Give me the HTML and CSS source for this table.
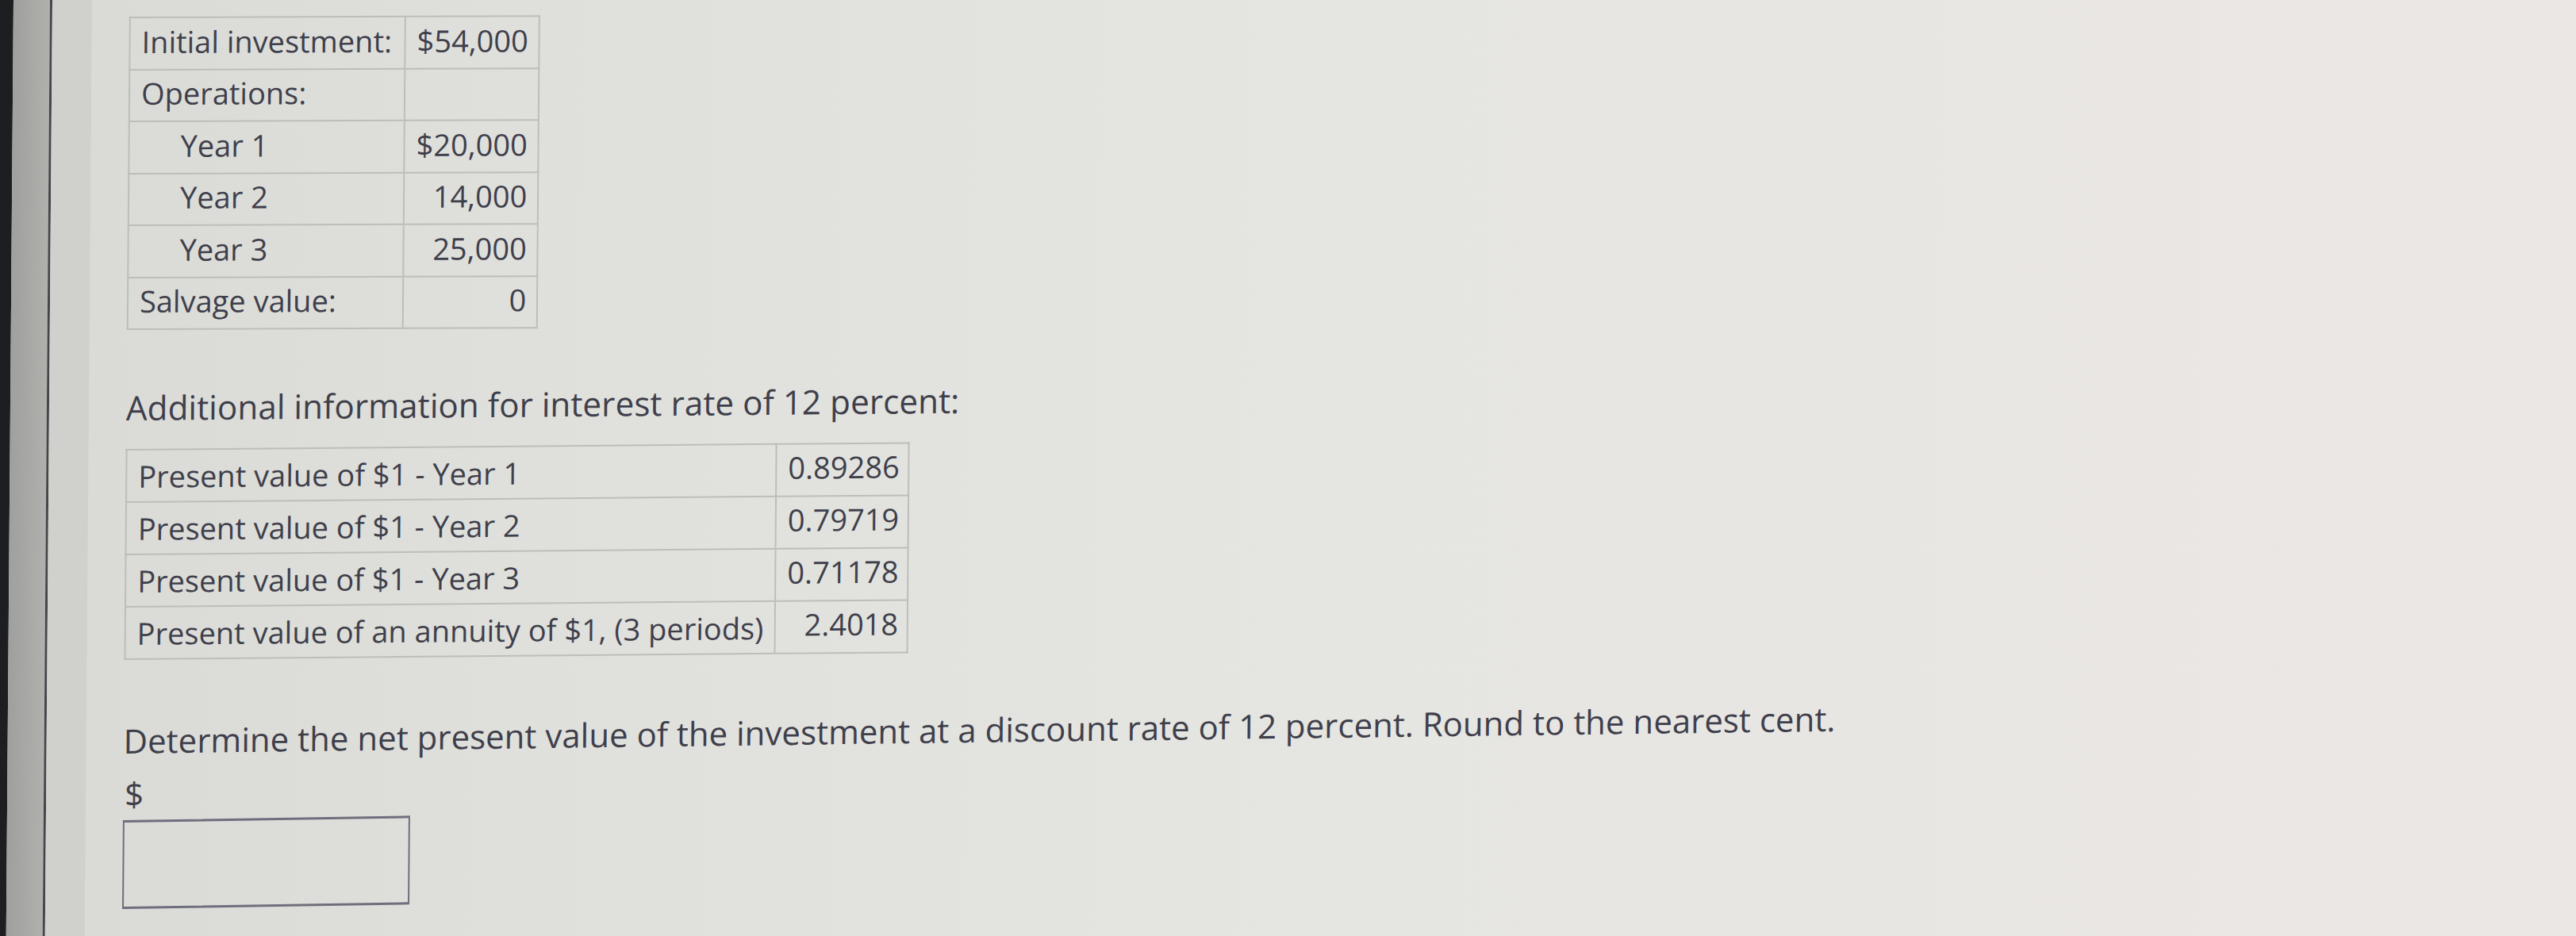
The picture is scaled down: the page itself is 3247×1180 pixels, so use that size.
FILE: index.html
```html
<!DOCTYPE html>
<html lang="en">
<head>
<meta charset="utf-8">
<title>Net present value</title>
<link rel="stylesheet" href="styles.css">
</head>
<body>
<div class="screen">
  <div class="bezel-dark"></div>
  <div class="bezel-gray"></div>
  <div class="bezel-line"></div>
  <div class="bezel-inner"></div>
  <main class="page">
    <table class="data data-invest">
      <tr><td class="lbl">Initial investment:</td><td class="val">$54,000</td></tr>
      <tr><td class="lbl">Operations:</td><td class="val"></td></tr>
      <tr><td class="lbl indent">Year 1</td><td class="val">$20,000</td></tr>
      <tr><td class="lbl indent">Year 2</td><td class="val">14,000</td></tr>
      <tr><td class="lbl indent">Year 3</td><td class="val">25,000</td></tr>
      <tr><td class="lbl">Salvage value:</td><td class="val">0</td></tr>
    </table>

    <p class="heading">Additional information for interest rate of 12 percent:</p>

    <table class="data data-pv">
      <tr><td class="lbl">Present value of $1 - Year 1</td><td class="val">0.89286</td></tr>
      <tr><td class="lbl">Present value of $1 - Year 2</td><td class="val">0.79719</td></tr>
      <tr><td class="lbl">Present value of $1 - Year 3</td><td class="val">0.71178</td></tr>
      <tr><td class="lbl">Present value of an annuity of $1, (3 periods)</td><td class="val">2.4018</td></tr>
    </table>

    <p class="question">Determine the net present value of the investment at a discount rate of 12 percent. Round to the nearest cent.</p>
    <div class="answer">
      <span class="currency">$</span>
      <input class="answer-box" type="text" aria-label="Net present value">
    </div>
  </main>
</div>
</body>
</html>
```
FILE: styles.css
```css
html, body {
  margin: 0;
  padding: 0;
}
body {
  width: 3247px;
  height: 1180px;
  overflow: hidden;
  font-family: "Open Sans", "Noto Sans", "Liberation Sans", sans-serif;
  color: #3f3f4b;
  background: #e8e6e3;
}
/* the screen is photographed at a slight angle */
.screen {
  display: flex;
  height: 1180px;
  width: 3270px;
  background: linear-gradient(90deg, #d9dad6 0%, #dfe0dc 20%, #e4e5e1 45%, #e8e6e3 70%, #ebe7e5 100%);
  transform: skewX(-0.45deg);
  transform-origin: 0 0;
}
.bezel-dark {
  width: 17px;
  background: #1c1e21;
}
.bezel-gray {
  width: 46px;
  background: linear-gradient(90deg, #9fa09d, #b0b1ad);
}
.bezel-line {
  width: 3px;
  background: #45464a;
}
.bezel-inner {
  width: 50px;
  background: #d0d1cd;
}
.page {
  flex: 1;
  padding: 21px 0 0 47px;
}
.data {
  border-collapse: collapse;
  font-size: 38px;
  line-height: 52px;
  transform-origin: 0 50%;
}
.data td {
  border: 2px solid #bdbebb;
  padding: 0 13px 6px 14px;
  white-space: nowrap;
  box-sizing: border-box;
}
.data-invest {
  transform: skewY(-0.2deg);
}
.data-invest .lbl { width: 347px; }
.data-invest .val { width: 168px; }
.data-invest td { height: 65.5px; }
.data .indent { padding-left: 64px; }
.data .val { text-align: right; }

.data-pv {
  transform: skewY(-0.5deg);
}
.data-pv .lbl { width: 819px; padding-bottom: 0; }
.data-pv .val { width: 163px; padding-right: 11px; padding-bottom: 8px; }
.data-pv td { height: 66px; }

.heading {
  font-size: 42.3px;
  line-height: 59px;
  margin: 68px 0 23px 0;
  transform: skewY(-0.5deg);
  transform-origin: 0 50%;
}
.question {
  font-size: 42px;
  line-height: 62px;
  margin: 71px 0 0 0;
  transform: skewY(-0.75deg);
  transform-origin: 0 50%;
}
.answer {
  display: flex;
  flex-direction: column;
  align-items: flex-start;
  margin-top: 5px;
  transform: skewY(-0.9deg);
  transform-origin: 0 50%;
}
.currency {
  font-size: 42px;
  line-height: 62px;
  padding-left: 2px;
}
.answer-box {
  margin-top: 2px;
  width: 362px;
  height: 112px;
  box-sizing: border-box;
  border: 3px solid #6e6f7c;
  border-left-width: 2px;
  border-right-width: 2px;
  background: transparent;
  padding: 0;
  outline: none;
}
```
